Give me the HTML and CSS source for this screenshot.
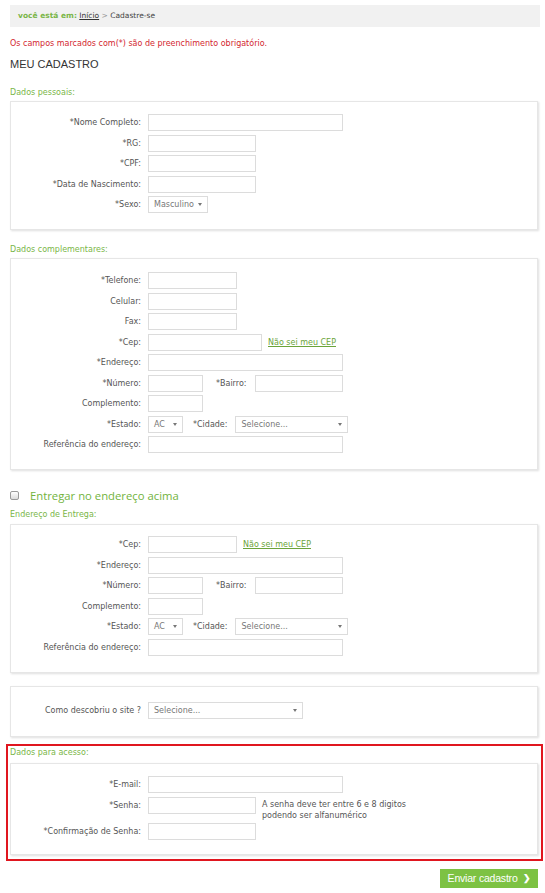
FILE: index.html
```html
<!DOCTYPE html>
<html lang="pt-BR">
<head>
<meta charset="utf-8">
<title>Cadastre-se</title>
<link rel="stylesheet" href="styles.css">
</head>
<body>
<div class="page">
  <div class="breadcrumb">
    <span class="bc-here">você está em:</span> <a class="bc-link" href="#">Início</a> <span class="bc-sep">&gt;</span> <span class="bc-current">Cadastre-se</span>
  </div>

  <p class="required-note">Os campos marcados com(*) são de preenchimento obrigatório.</p>
  <h1 class="page-title">MEU CADASTRO</h1>

  <div class="section-label first">Dados pessoais:</div>
  <div class="box box-personal">
    <div class="row"><label class="lbl">*Nome Completo:</label><input class="inp w195" type="text"></div>
    <div class="row"><label class="lbl">*RG:</label><input class="inp w108" type="text"></div>
    <div class="row"><label class="lbl">*CPF:</label><input class="inp w108" type="text"></div>
    <div class="row"><label class="lbl">*Data de Nascimento:</label><input class="inp w108" type="text"></div>
    <div class="row"><label class="lbl">*Sexo:</label><span class="sel w60"><span class="sel-text">Masculino</span></span></div>
  </div>

  <div class="section-label second">Dados complementares:</div>
  <div class="box box-comp">
    <div class="row"><label class="lbl">*Telefone:</label><input class="inp w89" type="text"></div>
    <div class="row"><label class="lbl">Celular:</label><input class="inp w89" type="text"></div>
    <div class="row"><label class="lbl">Fax:</label><input class="inp w89" type="text"></div>
    <div class="row"><label class="lbl">*Cep:</label><input class="inp w114" type="text"><a class="cep-link" href="#">Não sei meu CEP</a></div>
    <div class="row"><label class="lbl">*Endereço:</label><input class="inp w195" type="text"></div>
    <div class="row"><label class="lbl">*Número:</label><input class="inp w55" type="text"><label class="lbl-inline bairro">*Bairro:</label><input class="inp w88" type="text"></div>
    <div class="row"><label class="lbl">Complemento:</label><input class="inp w55" type="text"></div>
    <div class="row"><label class="lbl">*Estado:</label><span class="sel w35"><span class="sel-text">AC</span></span><label class="lbl-inline cidade">*Cidade:</label><span class="sel w113"><span class="sel-text">Selecione...</span></span></div>
    <div class="row"><label class="lbl">Referência do endereço:</label><input class="inp w195" type="text"></div>
  </div>

  <div class="deliver">
    <span class="check"></span>
    <span class="deliver-text">Entregar no endereço acima</span>
  </div>

  <div class="section-label third">Endereço de Entrega:</div>
  <div class="box box-delivery">
    <div class="row"><label class="lbl">*Cep:</label><input class="inp w89" type="text"><a class="cep-link" href="#">Não sei meu CEP</a></div>
    <div class="row"><label class="lbl">*Endereço:</label><input class="inp w195" type="text"></div>
    <div class="row"><label class="lbl">*Número:</label><input class="inp w55" type="text"><label class="lbl-inline bairro">*Bairro:</label><input class="inp w88" type="text"></div>
    <div class="row"><label class="lbl">Complemento:</label><input class="inp w55" type="text"></div>
    <div class="row"><label class="lbl">*Estado:</label><span class="sel w35"><span class="sel-text">AC</span></span><label class="lbl-inline cidade">*Cidade:</label><span class="sel w113"><span class="sel-text">Selecione...</span></span></div>
    <div class="row"><label class="lbl">Referência do endereço:</label><input class="inp w195" type="text"></div>
  </div>

  <div class="box box-source">
    <div class="row"><label class="lbl">Como descobriu o site ?</label><span class="sel w155"><span class="sel-text">Selecione...</span></span></div>
  </div>

  <div class="access">
    <div class="section-label access-label">Dados para acesso:</div>
    <div class="box box-access">
      <div class="row"><label class="lbl">*E-mail:</label><input class="inp w195" type="text"></div>
      <div class="row row-top"><label class="lbl">*Senha:</label><input class="inp w108" type="password"><span class="hint">A senha deve ter entre 6 e 8 digitos<br>podendo ser alfanumérico</span></div>
      <div class="row"><label class="lbl">*Confirmação de Senha:</label><input class="inp w108" type="password"></div>
    </div>
  </div>

  <div class="actions">
    <button class="submit" type="button">Enviar cadastro <span class="chev">&#10095;</span></button>
  </div>
</div>
</body>
</html>
```

FILE: styles.css
```css
* { box-sizing: border-box; }

html, body {
  margin: 0;
  padding: 0;
  background: #ffffff;
}

body {
  font-family: "DejaVu Sans", Verdana, sans-serif;
  font-size: 8px;
  color: #555555;
}

.page {
  width: 538px;
  padding: 5px 0 0 10px;
}

.breadcrumb {
  width: 530px;
  height: 22px;
  line-height: 22px;
  background: #f1f1f1;
  padding-left: 8px;
  font-size: 7.5px;
  color: #555;
}

.bc-here {
  color: #7ab648;
  font-weight: bold;
}

.bc-link {
  color: #333;
  text-decoration: underline;
}

.bc-sep { color: #999; }
.bc-current { color: #444; }

.required-note {
  margin: 12px 0 0;
  line-height: 10px;
  color: #d3272f;
  font-size: 8px;
}

.page-title {
  margin: 8px 0 0;
  line-height: 14px;
  font-family: "Liberation Sans", Arial, sans-serif;
  font-weight: normal;
  font-size: 11px;
  color: #333;
}

.section-label {
  line-height: 10px;
  color: #7ab648;
  font-size: 8px;
  margin-bottom: 3px;
}

.section-label.first { margin-top: 17px; }
.section-label.second { margin-top: 15px; }
.section-label.third { margin-top: 7px; margin-bottom: 4px; }

.box {
  width: 528px;
  background: #fff;
  border: 1px solid #e6e6e6;
  box-shadow: 1px 1px 2px rgba(0, 0, 0, 0.13);
  display: flex;
  flex-direction: column;
  gap: 3.5px;
}

.box-personal { padding: 12px 0 16px; }
.box-comp { padding: 13px 0 16px; }
.box-delivery { padding: 11px 0 16px; }
.box-source { margin-top: 13px; padding: 15px 0 17px; }
.box-access { padding: 12px 0 14px; gap: 4px; }

.row {
  display: flex;
  align-items: center;
  height: 17px;
}

.row-top {
  align-items: flex-start;
  height: 22px;
}

.lbl {
  width: 130px;
  margin-right: 7px;
  text-align: right;
  color: #555;
  font-size: 8px;
  white-space: nowrap;
}

.row-top .lbl { line-height: 17px; }

.lbl-inline {
  color: #555;
  font-size: 8px;
  white-space: nowrap;
}

.bairro { margin: 0 9px 0 13px; }
.cidade { margin: 0 8px 0 10px; }

.inp {
  height: 17px;
  border: 1px solid #dcdcdc;
  background: #fff;
  padding: 0 4px;
  font: inherit;
  margin: 0;
  outline: none;
}

.w35 { width: 35px; }
.w55 { width: 55px; }
.w60 { width: 60px; }
.w88 { width: 88px; }
.w89 { width: 89px; }
.w108 { width: 108px; }
.w113 { width: 113px; }
.w114 { width: 114px; }
.w155 { width: 155px; }
.w195 { width: 195px; }

.sel {
  position: relative;
  display: flex;
  align-items: center;
  height: 17px;
  border: 1px solid #dcdcdc;
  background: #fff;
  padding-left: 5px;
  color: #777;
  font-size: 8px;
}

.sel::after {
  content: "";
  position: absolute;
  right: 5px;
  top: 6px;
  border-left: 2px solid transparent;
  border-right: 2px solid transparent;
  border-top: 3px solid #777;
}

.cep-link {
  margin-left: 6px;
  color: #6ba43a;
  text-decoration: underline;
  font-size: 8px;
}

.deliver {
  display: flex;
  align-items: center;
  height: 16px;
  margin-top: 17px;
}

.check {
  width: 9px;
  height: 9px;
  border: 1px solid #9a9a9a;
  border-radius: 2px;
  background: linear-gradient(#ffffff, #dcdcdc);
}

.deliver-text {
  margin-left: 11px;
  font-family: "Open Sans", "Liberation Sans", sans-serif;
  font-size: 11.3px;
  color: #72b33d;
}

.access {
  margin: 7px 0 0 -4px;
  width: 537px;
  border: 2px solid #e0161f;
  padding: 2px 3px 4px 2px;
}

.access-label {
  margin-bottom: 5px;
}

.actions {
  display: flex;
  justify-content: flex-end;
  width: 528px;
  margin-top: 8px;
}

.submit {
  width: 98px;
  height: 19px;
  background: #7dc243;
  color: #fff;
  border: none;
  padding: 0;
  font-family: "Liberation Sans", Arial, sans-serif;
  font-size: 10.5px;
  letter-spacing: -0.2px;
  display: flex;
  align-items: center;
  justify-content: center;
  gap: 5px;
}

.chev {
  font-size: 9px;
  font-weight: bold;
}

.hint {
  margin-left: 6px;
  line-height: 11px;
  padding-top: 2px;
  color: #555;
  font-size: 8px;
}
```
